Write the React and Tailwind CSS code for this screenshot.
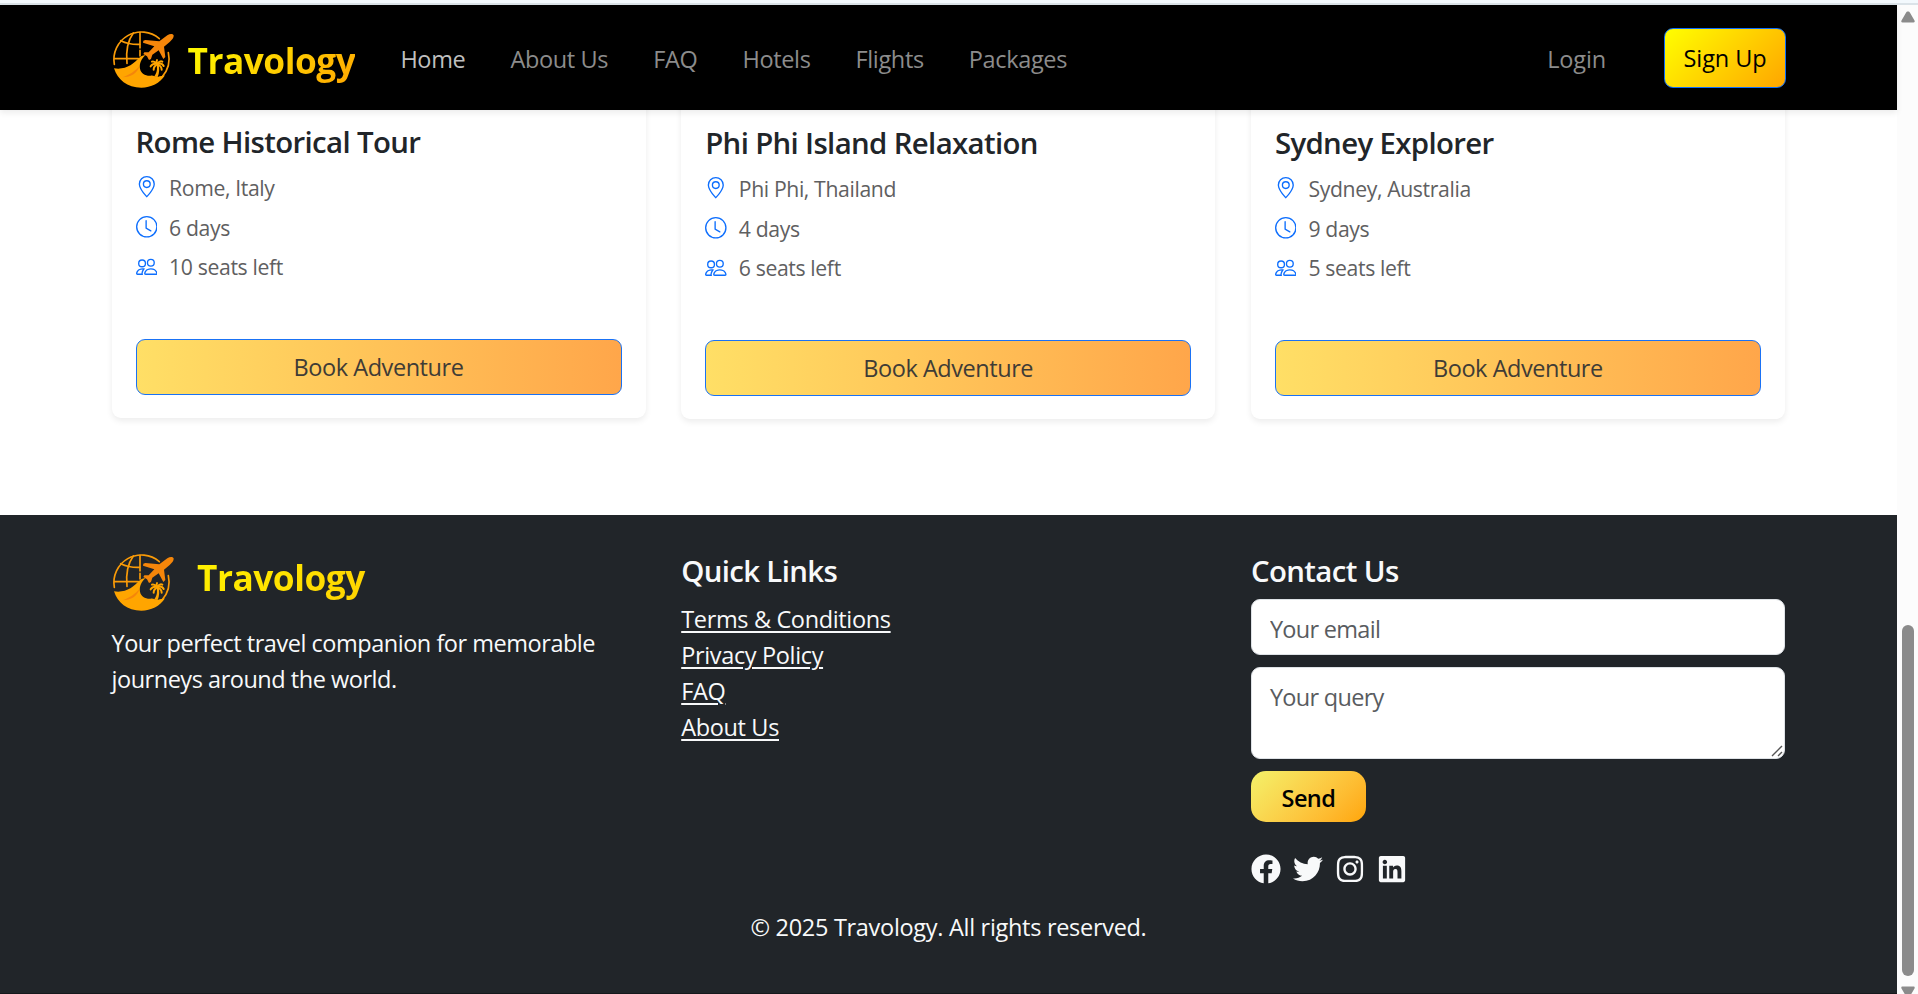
import { BsGeoAlt, BsClock, BsPeople } from 'react-icons/bs';
import { FaFacebook, FaTwitter, FaInstagram, FaLinkedin } from 'react-icons/fa';

const packages = [
  { title: 'Rome Historical Tour', place: 'Rome, Italy', days: 6, seats: 10, lifted: true },
  { title: 'Phi Phi Island Relaxation', place: 'Phi Phi, Thailand', days: 4, seats: 6 },
  { title: 'Sydney Explorer', place: 'Sydney, Australia', days: 9, seats: 5 },
];

const navLinks = ['About Us', 'FAQ', 'Hotels', 'Flights', 'Packages'];
const quickLinks = ['Terms & Conditions', 'Privacy Policy', 'FAQ', 'About Us'];
const socials = [FaFacebook, FaTwitter, FaInstagram, FaLinkedin];

function Logo({ className }) {
  return (
    <svg viewBox="34 24 198 192" className={`h-[64px] w-[66px] shrink-0 ${className}`} fill="none">
      <g stroke="#f99b08" strokeWidth="5" strokeLinecap="round">
        <path d="M44 133 A82.5 82.5 0 0 1 179 56" />
        <path d="M206 98 A82 82 0 0 1 187 171" />
        <path d="M121 37 V84 M121 91 V108" />
        <path d="M101 39 C84 62 78 92 82 130" />
        <path d="M63 62 C80 70 100 74 120 73" />
        <path d="M45 116 H116" />
      </g>
      <path
        fill="#f5860a"
        d="M222 46 C223 53 217 60 210 66 L193 80 L197 111 L191 117 L177 91 L158 104 L154 117 L148 120 L142 109 L131 102 L134 97 L147 97 L164 79 L130 68 L131 62 L137 60 L179 64 L203 46 C211 41 219 41 222 46 Z"
      />
      <path
        fill="#ffa500"
        d="M43 145 C78 151 103 131 117 115 C124 108 131 105 137 106 C126 116 118 131 121 146 C124 161 137 168 153 167 C160 165 166 170 174 171 C182 168 190 168 196 166 C181 190 154 203 125 203 C83 203 53 179 43 145 Z"
      />
      <path fill="#f5860a" d="M68 172 C88 166 108 152 119 138 C115 158 94 172 68 172 Z" />
      <path fill="#ffa500" d="M163 170 C172 160 174 146 170 133 L177 132 C180 146 179 160 174 171 Z" />
      <g stroke="#ffa500" strokeWidth="6" strokeLinecap="round">
        <path d="M173 132 C166 125 161 123 157 125" />
        <path d="M173 132 C163 130 156 134 153 139" />
        <path d="M173 133 C165 137 162 143 162 149" />
        <path d="M173 132 C170 126 170 123 172 120" />
        <path d="M173 132 C178 125 184 123 188 125" />
        <path d="M173 132 C183 129 189 132 192 138" />
        <path d="M173 133 C182 136 186 142 186 149" />
      </g>
    </svg>
  );
}

function Detail({ icon: Icon, children }) {
  return (
    <div className="mb-[7.2px] flex h-[32.4px] items-center gap-3">
      <Icon className="mb-0.5 size-[21.6px] text-[#0d6efd]" />
      <span className="text-[21.2px] leading-[32.4px] tracking-[-0.37px] text-[#5f6061]">{children}</span>
    </div>
  );
}

function Card({ item }) {
  return (
    <div
      className={`h-[430px] w-[534px] shrink-0 rounded-[9px] bg-white px-6 pt-[136px] shadow-[0_3px_6px_rgba(0,0,0,0.075)] ${
        item.lifted ? '-mt-px mb-px' : ''
      }`}
    >
      <h5 className="mb-3 text-[29.4px] leading-9 font-semibold tracking-[-0.65px] text-[#212529]">{item.title}</h5>
      <Detail icon={BsGeoAlt}>{item.place}</Detail>
      <Detail icon={BsClock}>{item.days} days</Detail>
      <Detail icon={BsPeople}>{item.seats} seats left</Detail>
      <button className="mt-[55.2px] flex h-14 w-full items-center justify-center rounded-[9px] border border-[#1a72f5] bg-linear-to-r from-[#ffdf66] to-[#ffa64a] pt-0.5 text-[23.5px] tracking-[-0.45px] text-[#3f3c36]">
        Book Adventure
      </button>
    </div>
  );
}

function Navbar() {
  return (
    <nav className="z-10 flex h-[105px] shrink-0 items-center bg-black px-[111px] pt-0.5 text-[23.5px] shadow-[0_3px_6px_rgba(0,0,0,0.075)]">
      <Logo className="mt-[3px]" />
      <span className="mt-1 ml-[10.5px] bg-linear-135 from-[#ffff00] to-[#ffa500] bg-clip-text text-[35.3px] font-bold tracking-[-0.5px] text-transparent">
        Travology
      </span>
      <div className="mt-0.5 ml-[45px] flex gap-[45px] tracking-[-0.35px] text-[#8c8c8c]">
        <span className="text-[#bfbfbf]">Home</span>
        {navLinks.map((link) => (
          <span key={link}>{link}</span>
        ))}
      </div>
      <span className="mt-0.5 mr-[58px] ml-auto tracking-[-0.15px] text-[#8c8c8c]">Login</span>
      <button className="mb-px flex h-[60px] w-[122px] items-center justify-center rounded-[9px] border border-[#0d6efd] bg-linear-135 from-[#ffff00] to-[#ffa500] pt-px tracking-[-0.1px] text-black">
        Sign Up
      </button>
    </nav>
  );
}

function Footer() {
  return (
    <footer className="flex flex-1 flex-col border-b border-[#15181b] bg-[#212529] pt-9 text-[23.5px] leading-9 text-[#f8f9fa]">
      <div className="flex gap-[35.7px] pl-[111.5px]">
        <section className="w-[534px] pt-px">
          <h5 className="flex h-[73px] items-start bg-linear-135 from-[#ffff00] to-[#ffa500] bg-clip-text text-[35.3px] leading-[45px] font-bold tracking-[-0.5px] text-transparent">
            <Logo className="-mt-px -ml-[0.5px]" />
            <span className="mt-[3px] ml-[20px]">Travology</span>
          </h5>
          <p className="tracking-[-0.47px]">
            Your perfect travel companion for memorable
            <br />
            journeys around the world.
          </p>
        </section>
        <section className="w-[534px] pt-0.5">
          <h5 className="mb-3 text-[29.4px] font-semibold tracking-[-0.65px]">Quick Links</h5>
          <ul>
            {quickLinks.map((link) => (
              <li key={link} className="tracking-[-0.35px] underline decoration-2 underline-offset-[3px]">
                {link}
              </li>
            ))}
          </ul>
        </section>
        <section className="w-[534px] pt-0.5">
          <h5 className="mb-2.5 text-[29.4px] font-semibold tracking-[-0.6px]">Contact Us</h5>
          <input
            placeholder="Your email"
            className="mb-3 block h-14 w-full rounded-[9px] border border-[#dee2e6] bg-white px-[18px] pt-[3px] tracking-[-0.7px] placeholder:text-[#595c5f]"
          />
          <div className="relative mb-3 h-[92px]">
            <textarea
              placeholder="Your query"
              className="block h-full w-full resize-none overflow-hidden rounded-[9px] border border-[#dee2e6] bg-white px-[18px] pt-[11px] tracking-[-0.7px] placeholder:text-[#595c5f]"
            />
            <svg viewBox="0 0 12 12" className="absolute right-[2px] bottom-[2px] size-3" stroke="#555" strokeWidth="1.4">
              <path d="M1 11 L11 1 M7 11 L11 7" />
            </svg>
          </div>
          <button className="flex h-[51px] w-[115px] items-center justify-center rounded-[15px] bg-linear-135 from-[#f3f169] to-[#ffa500] pt-0.5 font-semibold tracking-[-0.6px] text-black">
            Send
          </button>
          <div className="mt-8 flex gap-3">
            {socials.map((Icon, i) => (
              <Icon key={i} className="size-[30px]" />
            ))}
          </div>
        </section>
      </div>
      <p className="mt-[25px] text-center tracking-[-0.3px]">© 2025 Travology. All rights reserved.</p>
    </footer>
  );
}

function Scrollbar() {
  return (
    <div className="flex w-[21px] shrink-0 flex-col items-center overflow-hidden bg-[#fcfcfc] pt-1.5">
      <svg viewBox="0 0 14 12" className="h-3 w-3.5 shrink-0" fill="#8b8b8b">
        <path d="M7 0.5 C8 0.5 8.6 1 9 1.8 L13.5 9.5 C14 10.6 13.6 11.5 12.5 11.5 H1.5 C0.4 11.5 0 10.6 0.5 9.5 L5 1.8 C5.4 1 6 0.5 7 0.5 Z" />
      </svg>
      <div className="mt-[602px] h-[351px] w-3 shrink-0 rounded-full bg-[#8b8b8b]" />
      <svg viewBox="0 0 14 12" className="mt-[10px] h-3 w-3.5 shrink-0" fill="#8b8b8b">
        <path d="M7 11.5 C8 11.5 8.6 11 9 10.2 L13.5 2.5 C14 1.4 13.6 0.5 12.5 0.5 H1.5 C0.4 0.5 0 1.4 0.5 2.5 L5 10.2 C5.4 11 6 11.5 7 11.5 Z" />
      </svg>
    </div>
  );
}

export default function App() {
  return (
    <div className="flex h-[994px] w-[1918px] flex-col overflow-hidden bg-white font-['Open_Sans',sans-serif]">
      <div className="h-[5px] shrink-0 border-b-2 border-[#dbe3e8] bg-[#f3f9fd]" />
      <div className="flex h-[989px]">
        <div className="flex w-[1897px] flex-col">
          <Navbar />
          <main className="flex h-[405px] shrink-0 items-start overflow-hidden pl-[111.5px]">
            <div className="-mt-[121px] flex gap-[35.7px]">
              {packages.map((item) => (
                <Card key={item.title} item={item} />
              ))}
            </div>
          </main>
          <Footer />
        </div>
        <Scrollbar />
      </div>
    </div>
  );
}
